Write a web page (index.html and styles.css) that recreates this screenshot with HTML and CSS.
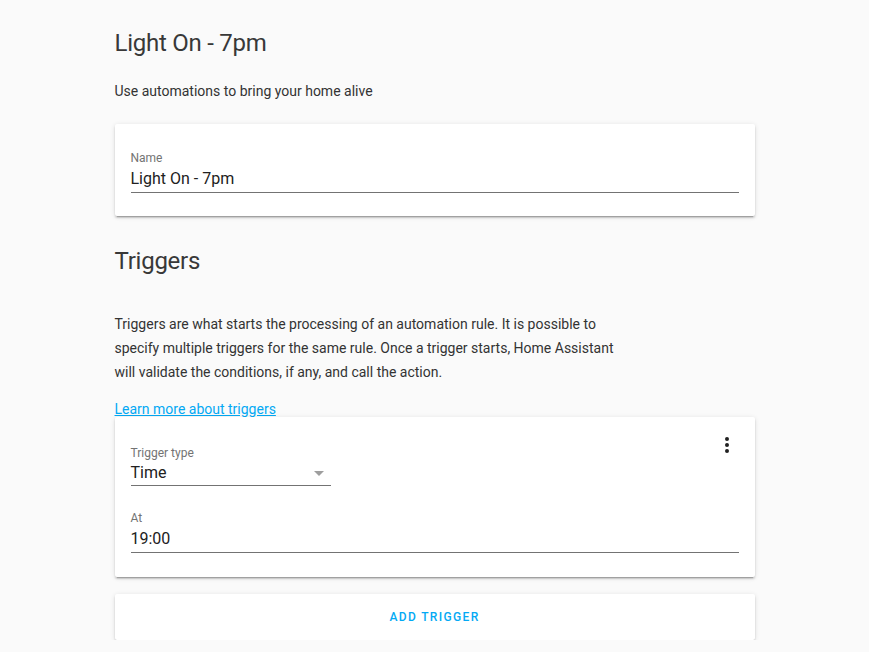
FILE: index.html
```html
<!DOCTYPE html>
<html lang="en">
<head>
<meta charset="utf-8">
<title>Light On - 7pm</title>
<link rel="stylesheet" href="styles.css">
</head>
<body>
<main class="page">
  <h1 class="title">Light On - 7pm</h1>
  <p class="subtitle">Use automations to bring your home alive</p>

  <section class="card card-name">
    <div class="field">
      <div class="label">Name</div>
      <div class="input">Light On - 7pm</div>
    </div>
  </section>

  <h2 class="title title-triggers">Triggers</h2>
  <p class="intro">Triggers are what starts the processing of an automation rule. It is possible to specify multiple triggers for the same rule. Once a trigger starts, Home Assistant will validate the conditions, if any, and call the action.</p>
  <a class="learn" href="#">Learn more about triggers</a>

  <section class="card card-trigger">
    <button class="menu-btn" aria-label="Menu">
      <svg viewBox="0 0 24 24" width="24" height="24"><path d="M12,16A2,2 0 0,1 14,18A2,2 0 0,1 12,20A2,2 0 0,1 10,18A2,2 0 0,1 12,16M12,10A2,2 0 0,1 14,12A2,2 0 0,1 12,14A2,2 0 0,1 10,12A2,2 0 0,1 12,10M12,4A2,2 0 0,1 14,6A2,2 0 0,1 12,8A2,2 0 0,1 10,6A2,2 0 0,1 12,4Z"/></svg>
    </button>
    <div class="field field-dropdown">
      <div class="label">Trigger type</div>
      <div class="input input-dropdown">
        <span>Time</span>
        <svg class="arrow" viewBox="0 0 24 24" width="24" height="24"><path d="M7,10L12,15L17,10H7Z"/></svg>
      </div>
    </div>
    <div class="field field-at">
      <div class="label">At</div>
      <div class="input">19:00</div>
    </div>
  </section>

  <section class="card card-add">
    <button class="add-btn">Add trigger</button>
  </section>
</main>
</body>
</html>
```

FILE: styles.css
```css
* { box-sizing: border-box; }

html, body {
  margin: 0;
  padding: 0;
  background: #fafafa;
}

body {
  font-family: Roboto, "Noto Sans", sans-serif;
  color: #212121;
  -webkit-font-smoothing: antialiased;
}

.page {
  width: 640px;
  margin: 0 auto;
  padding-top: 27px;
  display: flex;
  flex-direction: column;
}

.title {
  margin: 0;
  font-size: 24px;
  line-height: 32px;
  font-weight: 400;
  letter-spacing: -0.25px;
  color: #383838;
}

.subtitle {
  margin: 22px 0 0;
  font-size: 14px;
  line-height: 20px;
  color: #333;
}

.card {
  position: relative;
  background: #fff;
  border-radius: 2px;
  box-shadow: 0 2px 2px 0 rgba(0,0,0,.14), 0 1px 5px 0 rgba(0,0,0,.12), 0 3px 1px -2px rgba(0,0,0,.2);
}

.card-name {
  margin-top: 23px;
  padding: 26px 16px 23px;
}

.card-name .input {
  margin-top: 1px;
}

.title-triggers {
  margin-top: 29px;
}

.intro {
  margin: 35px 0 0;
  max-width: 520px;
  font-size: 14px;
  line-height: 24px;
  color: #333;
}

.learn {
  display: block;
  align-self: flex-start;
  margin: 17px 0 -1px;
  font-size: 14px;
  line-height: 17px;
  color: #03a9f4;
  text-decoration: underline;
}

.field {
  display: flex;
  flex-direction: column;
}

.label {
  font-size: 12px;
  line-height: 16px;
  color: #737373;
}

.input {
  font-size: 16px;
  line-height: 24px;
  color: #212121;
  padding-bottom: 1px;
  border-bottom: 1px solid #737373;
}

.card-trigger {
  padding: 28px 16px 24px;
}

.field-dropdown {
  width: 200px;
}

.input-dropdown {
  display: flex;
  justify-content: space-between;
  align-items: center;
  padding-bottom: 0;
}

.arrow {
  fill: #9e9e9e;
  display: block;
}

.field-at {
  margin-top: 24px;
}

.field-at .input {
  margin-top: 1px;
}

.menu-btn {
  position: absolute;
  top: 16px;
  right: 16px;
  width: 24px;
  height: 24px;
  padding: 0;
  border: 0;
  background: none;
  cursor: pointer;
}

.menu-btn svg {
  display: block;
  fill: #212121;
}

.card-add {
  margin-top: 17px;
  height: 46px;
  display: flex;
  align-items: center;
  justify-content: center;
}

.add-btn {
  border: 0;
  background: none;
  padding: 0;
  font-family: Roboto, "Noto Sans", sans-serif;
  font-size: 12px;
  font-weight: 500;
  letter-spacing: 1.35px;
  text-transform: uppercase;
  color: #03a9f4;
  cursor: pointer;
}
```
